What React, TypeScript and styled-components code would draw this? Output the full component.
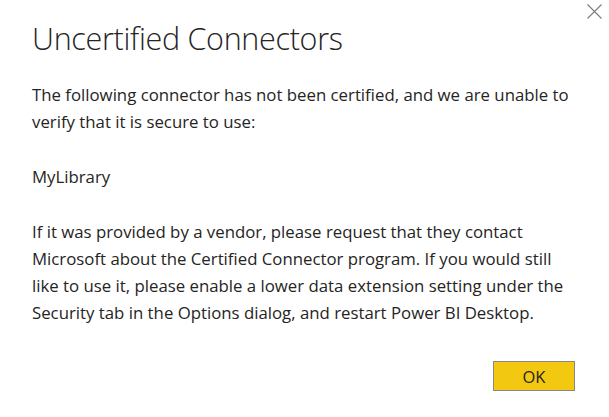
import React from 'react';
import styled, { createGlobalStyle } from 'styled-components';

const GlobalStyle = createGlobalStyle`
  html, body {
    margin: 0;
    padding: 0;
    background: #ffffff;
  }
  body {
    font-family: "Segoe UI", "Open Sans", "Noto Sans", sans-serif;
    color: #252423;
  }
`;

const Dialog = styled.div`
  width: 609px;
  height: 417px;
  box-sizing: border-box;
  display: flex;
  flex-direction: column;
  background: #ffffff;
`;

const Header = styled.div`
  display: flex;
  align-items: flex-start;
  justify-content: space-between;
  padding: 0 0 0 32px;
`;

const Title = styled.h1`
  margin: 17px 0 0;
  font-size: 30.5px;
  font-weight: 300;
  line-height: 42px;
  color: #252423;
  letter-spacing: -0.3px;
`;

const CloseButton = styled.button`
  border: none;
  background: transparent;
  padding: 0;
  margin: 3px 7px 0 0;
  width: 16px;
  height: 16px;
  display: flex;
  align-items: center;
  justify-content: center;
  cursor: pointer;
`;

const Body = styled.div`
  flex: 1;
  width: 545px;
  padding: 22px 0 0 32px;
`;

const Paragraph = styled.p`
  margin: 0 0 28px;
  font-size: 16.8px;
  line-height: 27px;
  color: #252423;
`;

const Footer = styled.div`
  display: flex;
  justify-content: flex-end;
  padding: 0 34px 26px 0;
`;

const OkButton = styled.button`
  width: 82px;
  height: 30px;
  box-sizing: border-box;
  background: #f2c811;
  border: 1px solid #8a8886;
  font-family: inherit;
  font-size: 16.5px;
  color: #252423;
  cursor: pointer;
`;

const App: React.FC = () => {
  return (
    <>
      <GlobalStyle />
      <Dialog>
        <Header>
          <Title>Uncertified Connectors</Title>
          <CloseButton aria-label="Close">
            <svg width="15" height="15" viewBox="0 0 15 15">
              <path d="M0.5 0.5 L14.5 14.5 M14.5 0.5 L0.5 14.5" stroke="#7a7a7a" strokeWidth="1.1" />
            </svg>
          </CloseButton>
        </Header>
        <Body>
          <Paragraph>
            The following connector has not been certified, and we are unable to verify that it is secure
            to use:
          </Paragraph>
          <Paragraph>MyLibrary</Paragraph>
          <Paragraph>
            If it was provided by a vendor, please request that they contact Microsoft about the Certified
            Connector program. If you would still like to use it, please enable a lower data extension
            setting under the Security tab in the Options dialog, and restart Power BI Desktop.
          </Paragraph>
        </Body>
        <Footer>
          <OkButton>OK</OkButton>
        </Footer>
      </Dialog>
    </>
  );
};

export default App;
